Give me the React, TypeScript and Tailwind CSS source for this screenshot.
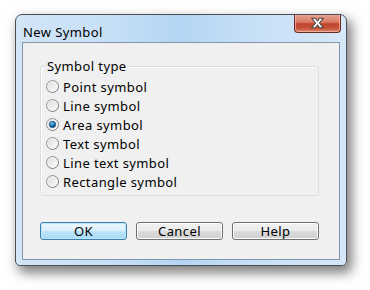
import React from "react";

const font = { fontFamily: '"Noto Sans", "Open Sans", sans-serif' };

function Radio({ checked }: { checked?: boolean }) {
  return (
    <svg width="13" height="13" viewBox="0 0 13 13" className="shrink-0">
      <defs>
        <linearGradient id="rb" x1="0" y1="0" x2="1" y2="1">
          <stop offset="0" stopColor="#a3a3a3" />
          <stop offset="1" stopColor="#6e6e6e" />
        </linearGradient>
        <linearGradient id="rf" x1="0" y1="0" x2="1" y2="1">
          <stop offset="0" stopColor="#d9d9d9" />
          <stop offset="0.5" stopColor="#ececec" />
          <stop offset="1" stopColor="#ffffff" />
        </linearGradient>
        <radialGradient id="rd" cx="0.4" cy="0.35" r="0.7">
          <stop offset="0" stopColor="#8fd3ff" />
          <stop offset="0.5" stopColor="#1a74b8" />
          <stop offset="1" stopColor="#0c3f6e" />
        </radialGradient>
      </defs>
      <circle cx="6.5" cy="6.5" r="6" fill="url(#rf)" stroke="url(#rb)" strokeWidth="1" />
      <circle cx="6.5" cy="6.5" r="4.6" fill="none" stroke="#f4f4f4" strokeWidth="0.8" />
      {checked && <circle cx="6.5" cy="6.5" r="3.2" fill="url(#rd)" stroke="#174b7a" strokeWidth="0.6" />}
    </svg>
  );
}

function Btn({ label, def }: { label: string; def?: boolean }) {
  return (
    <div
      className={
        "w-[87px] h-[18px] rounded-[3px] border flex items-center justify-center text-[13px] tracking-[0.4px] text-black leading-none " +
        (def
          ? "border-[#3c7fb1] shadow-[inset_0_0_0_1px_#bfe6f8] bg-[linear-gradient(#eaf6fd_0%,#d9f0fc_50%,#bee6fd_50%,#a7d9f5_100%)]"
          : "border-[#707070] shadow-[inset_0_0_0_1px_#fcfcfc] bg-[linear-gradient(#f2f2f2_0%,#ebebeb_50%,#dddddd_50%,#cfcfcf_100%)]")
      }
      style={font}
    >
      {label}
    </div>
  );
}

export default function App() {
  const items = [
    "Point symbol",
    "Line symbol",
    "Area symbol",
    "Text symbol",
    "Line text symbol",
    "Rectangle symbol",
  ];
  return (
    <div className="w-[370px] h-[290px] bg-white pt-[14px] pl-[15px]" style={font}>
      <div className="w-[332px] h-[252px] rounded-t-[7px] rounded-b-[5px] border border-[#4a4f55] shadow-[4px_6px_12px_1px_rgba(0,0,0,0.5)] bg-[linear-gradient(90deg,#d3e5f7_0%,#c5dff6_30%,#b4d5f3_50%,#c6dff6_70%,#d6e7f8_100%)] flex flex-col overflow-hidden">
        <div className="h-[27px] flex items-start justify-between pl-[7px] pr-[5px] shrink-0">
          <div className="text-[13px] tracking-[0.4px] text-black leading-[16px] mt-[9px]">New Symbol</div>
          <div className="w-[47px] h-[19px] -mt-[1px] rounded-b-[4px] border border-[#6a2a22] border-t-0 shadow-[inset_0_0_0_1px_rgba(255,200,190,0.6)] bg-[linear-gradient(#eaa898_0%,#d87a63_45%,#c2442b_55%,#c8553c_80%,#dd8a6e_100%)] flex items-center justify-center">
            <svg width="15" height="12" viewBox="0 0 14 11">
              <path
                d="M1.5 1 H5 L7 3.6 L9 1 H12.5 L8.8 5.5 L12.5 10 H9 L7 7.4 L5 10 H1.5 L5.2 5.5 Z"
                fill="#ffffff"
                stroke="#4b4b4b"
                strokeWidth="1"
                strokeLinejoin="round"
              />
            </svg>
          </div>
        </div>
        <div className="flex-1 mx-[6px] mb-[5px] border border-[#8396ab] bg-[#f0f0f0] flex flex-col">
          <div className="ml-[17px] mt-[23px] w-[279px] h-[130px] relative rounded-[3px] border border-[#d5dfe5] shadow-[inset_1px_1px_0_#ffffff]">
            <span className="absolute left-[5px] -top-[9px] px-[1px] bg-[#f0f0f0] text-[13px] tracking-[0.4px] leading-[16px] text-black">
              Symbol type
            </span>
            <div className="flex flex-col mt-[10px] ml-[5px]">
              {items.map((t, i) => (
                <div key={t} className="h-[19px] flex items-center gap-[4px]">
                  <Radio checked={i === 2} />
                  <span className="text-[13px] tracking-[0.4px] leading-[16px] text-black">{t}</span>
                </div>
              ))}
            </div>
          </div>
          <div className="flex gap-[9px] ml-[17px] mt-[26px]">
            <Btn label="OK" def />
            <Btn label="Cancel" />
            <Btn label="Help" />
          </div>
        </div>
      </div>
    </div>
  );
}
